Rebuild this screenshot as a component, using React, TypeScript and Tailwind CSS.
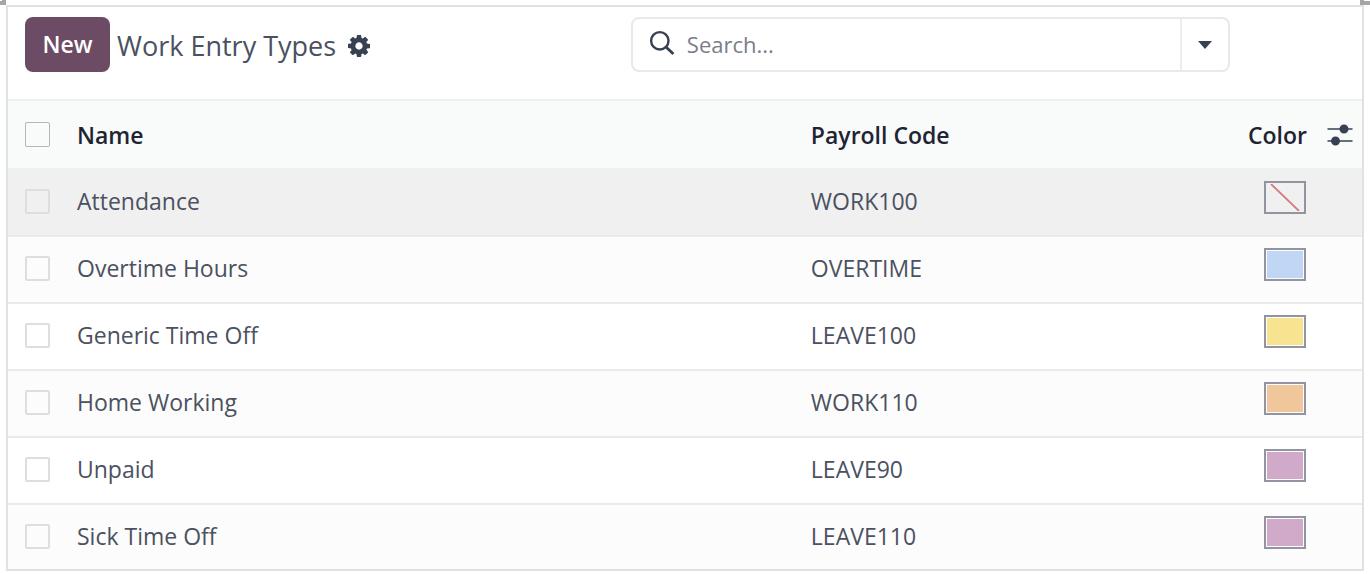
import React from 'react';

const entryTypes = [
  { name: 'Attendance', code: 'WORK100', color: '' },
  { name: 'Overtime Hours', code: 'OVERTIME', color: 'bg-[#c1d6f4]' },
  { name: 'Generic Time Off', code: 'LEAVE100', color: 'bg-[#f8e391]' },
  { name: 'Home Working', code: 'WORK110', color: 'bg-[#f0c79b]' },
  { name: 'Unpaid', code: 'LEAVE90', color: 'bg-[#d1a9c9]' },
  { name: 'Sick Time Off', code: 'LEAVE110', color: 'bg-[#d1a9c9]' },
];

const CheckBox = ({ label, dark = false }: { label: string; dark?: boolean }) => (
  <input
    type="checkbox"
    aria-label={label}
    className={`block size-[25px] appearance-none rounded-[2px] ${dark ? 'border border-[#b4b6bc]' : 'border-2 border-[#dedede]'}`}
  />
);

const CogIcon = () => (
  <svg viewBox="0 128 1536 1536" className="size-[22px]" fill="#374151">
    <path d="M1024 896q0-106-75-181t-181-75-181 75-75 181 75 181 181 75 181-75 75-181zm512-109v222q0 12-8 23t-20 13l-185 28q-19 54-39 91 35 50 107 138 10 12 10 25t-9 23q-27 37-99 108t-94 71q-12 0-26-9l-138-108q-44 23-91 38-16 136-29 186-7 28-36 28h-222q-14 0-24.5-8.5t-11.5-21.5l-28-184q-49-16-90-37l-141 107q-10 9-25 9-14 0-25-11-126-114-165-168-7-10-7-23 0-12 8-23 15-21 51-66.5t54-70.5q-27-50-41-99l-183-27q-13-2-21-12.5t-8-23.5v-222q0-12 8-23t19-13l186-28q14-46 39-92-40-57-107-138-10-12-10-24 0-10 9-23 26-36 98.5-107.5t94.5-71.5q13 0 26 10l138 107q44-23 91-38 16-136 29-186 7-28 36-28h222q14 0 24.5 8.5t11.5 21.5l28 184q49 16 90 37l142-107q9-9 24-9 13 0 25 10 129 119 165 170 7 8 7 22 0 12-8 23-15 21-51 66.5t-54 70.5q26 50 41 98l183 28q13 2 21 12.5t8 23.5z" />
  </svg>
);

const SearchIcon = () => (
  <svg viewBox="0 0 26 26" className="mb-1 size-[26px] shrink-0" fill="none" stroke="#374151" strokeWidth="2.4">
    <circle cx="10.8" cy="10.8" r="8.7" />
    <path d="M17 17 24.4 24" strokeWidth="2.8" />
  </svg>
);

const OptionsIcon = () => (
  <svg viewBox="0 0 26 22" className="block h-[22px] w-[26px]" stroke="#374151" strokeWidth="1.6" fill="#374151">
    <path d="M0.5 5H25.5M0.5 17H25.5" />
    <circle cx="17" cy="5" r="3.7" />
    <circle cx="8.5" cy="17" r="3.7" />
  </svg>
);

const Swatch = ({ color }: { color: string }) => (
  <div className="ml-auto h-[33px] w-[42px] border-2 border-[#92959f] p-px">
    {color ? (
      <div className={`h-full w-full ${color}`} />
    ) : (
      <svg viewBox="0 0 36 27" className="block h-full w-full" stroke="#d37b80" strokeWidth="1.8">
        <path d="M4 0 32 27" />
      </svg>
    )}
  </div>
);

const App = () => {
  return (
    <div className="relative bg-white px-[6px] pt-[5px] pb-1 font-['Open_Sans','Noto_Sans',sans-serif] text-[#4b5160]">
      {/* Selection handles */}
      <div className="absolute top-0 left-0 h-[5px] w-[6px] border-r-4 border-b-4 border-[#a6a6a6]" />
      <div className="absolute top-0 right-0 h-[5px] w-[10px] border-b-4 border-l-4 border-[#a6a6a6]" />

      <main className="border-2 border-[#dee2e6]">
        {/* Control panel */}
        <header className="flex pt-[10px] pb-[27px]">
          <div className="flex w-[46%] items-center pl-[17px]">
            <button className="h-[55px] w-[85px] rounded-lg bg-[#6c4c64] text-[23px] font-semibold text-white">
              New
            </button>
            <div className="ml-[7px] flex items-center gap-3 pt-[3px]">
              <h1 className="text-[27px] whitespace-nowrap">Work Entry Types</h1>
              <button aria-label="Actions">
                <CogIcon />
              </button>
            </div>
          </div>
          <div className="mr-[132px] flex h-[55px] flex-1 rounded-lg border-2 border-[#e9e9ea]">
            <label className="flex min-w-0 flex-1 items-center gap-3 pl-4">
              <SearchIcon />
              <input
                type="text"
                placeholder="Search..."
                aria-label="Search"
                className="min-w-0 flex-1 text-[22px] outline-none placeholder:text-[#7a7e88]"
              />
            </label>
            <button
              aria-label="Toggle search panel"
              className="flex w-12 items-center justify-center border-l-2 border-[#ededee]"
            >
              <svg viewBox="0 0 14 8" className="h-2 w-[14px]" fill="#374151">
                <path d="M0 0H14L7 8Z" />
              </svg>
            </button>
          </div>
        </header>

        {/* List */}
        <table className="w-full table-fixed text-left text-[23px] leading-8">
          <thead>
            <tr className="h-[69px] border-y-2 border-[#eeefef] bg-[#f9fafa] text-[#1f2433]">
              <th className="w-[69px] pl-[17px]">
                <CheckBox label="Select all" dark />
              </th>
              <th className="w-[54.2%] font-semibold">Name</th>
              <th className="font-semibold">Payroll Code</th>
              <th className="w-[100px] text-right font-semibold">Color</th>
              <th className="w-[55px] pl-5">
                <button aria-label="Optional columns" className="block">
                  <OptionsIcon />
                </button>
              </th>
            </tr>
          </thead>
          <tbody>
            {entryTypes.map((entry) => (
              <tr
                key={entry.name}
                className="h-[67px] border-b-2 border-[#e9eaea] align-top first:bg-[#f0f0f0] last:h-[65px] last:border-b-0 even:bg-[#fcfcfc]"
              >
                <td className="pt-[19px] pl-[17px]">
                  <CheckBox label={`Select ${entry.name}`} />
                </td>
                <td className="pt-[15px]">{entry.name}</td>
                <td className="pt-[15px]">{entry.code}</td>
                <td className="pt-[11px] pr-px">
                  <Swatch color={entry.color} />
                </td>
                <td />
              </tr>
            ))}
          </tbody>
        </table>
      </main>
    </div>
  );
};

export default App;
